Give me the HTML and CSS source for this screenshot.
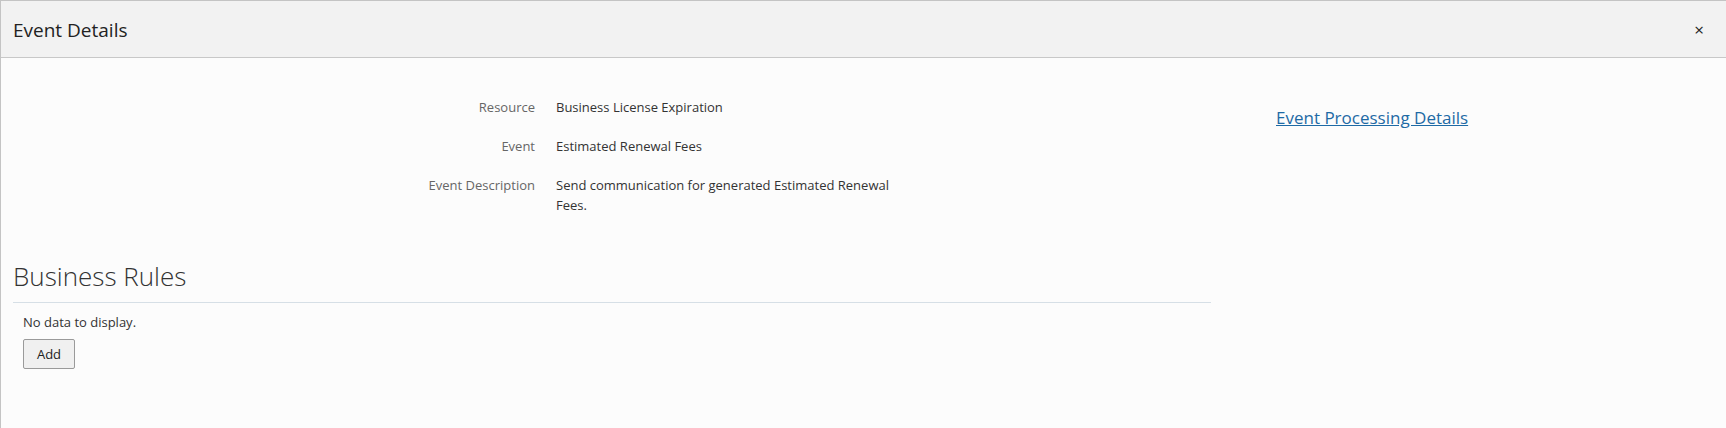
FILE: index.html
```html
<!DOCTYPE html>
<html lang="en">
<head>
  <meta charset="UTF-8">
  <title>Event Details</title>
  <link rel="stylesheet" href="styles.css">
</head>
<body>
  <div class="dialog">
    <header class="dialog-header">
      <h1>Event Details</h1>
      <span class="close-btn">&times;</span>
    </header>

    <div class="dialog-body">
      <div class="top-section">
        <div class="form-grid">
          <div class="label">Resource</div>
          <div class="value">Business License Expiration</div>
          <div class="label">Event</div>
          <div class="value">Estimated Renewal Fees</div>
          <div class="label">Event Description</div>
          <div class="value">Send communication for generated Estimated Renewal Fees.</div>
        </div>
        <a href="#" class="details-link">Event Processing Details</a>
      </div>

      <!-- Business Rules -->
      <section class="rules">
        <h2>Business Rules</h2>
        <p class="no-data">No data to display.</p>
        <button class="add-btn">Add</button>
      </section>
    </div>
  </div>
</body>
</html>
```

FILE: styles.css
```css
body, h1, h2, p, button {
  margin: 0;
  padding: 0;
  box-sizing: border-box;
}

body {
  font-family: "Open Sans", "Noto Sans", Arial, sans-serif;
  background-color: #fcfcfc;
  color: #333;
  height: 428px;
  overflow: hidden;
}

.dialog {
  border-top: 1px solid #c4c4c4;
  border-left: 1px solid #c4c4c4;
  height: 100%;
  background-color: #fcfcfc;
}

/* Header */
.dialog-header {
  background-color: #f2f2f2;
  border-bottom: 1px solid #c8c8c8;
  height: 56px;
  padding: 0 22px 0 12px;
  display: flex;
  align-items: center;
  justify-content: space-between;
}

.dialog-header h1 {
  font-size: 19px;
  font-weight: 400;
  color: #222;
  padding-top: 1px;
}

.close-btn {
  font-size: 17px;
  line-height: 1;
  color: #222;
  cursor: pointer;
}

/* Body */
.dialog-body {
  padding: 39px 0 0 12px;
}

.top-section {
  display: flex;
  align-items: flex-start;
}

.form-grid {
  display: grid;
  grid-template-columns: 522px 345px;
  column-gap: 21px;
  row-gap: 19px;
  font-size: 13px;
  line-height: 20px;
}

.form-grid .label {
  text-align: right;
  color: #666;
}

.form-grid .value {
  color: #333;
}

.details-link {
  margin-left: 375px;
  margin-top: 9px;
  font-size: 17px;
  color: #1e6aa5;
  text-decoration: underline;
}

/* Business Rules */
.rules {
  margin-top: 43px;
  width: 1198px;
}

.rules h2 {
  font-size: 26px;
  font-weight: 300;
  color: #333;
  line-height: 36px;
  padding-bottom: 8px;
  border-bottom: 1px solid #d6dfe6;
}

.no-data {
  font-size: 13px;
  line-height: 20px;
  padding: 9px 0 0 10px;
  color: #333;
}

.add-btn {
  margin: 7px 0 0 10px;
  width: 52px;
  height: 30px;
  font-family: inherit;
  font-size: 13px;
  color: #222;
  background-color: #f0f0f0;
  border: 1px solid #9a9a9a;
  border-radius: 2px;
  cursor: pointer;
}
```
